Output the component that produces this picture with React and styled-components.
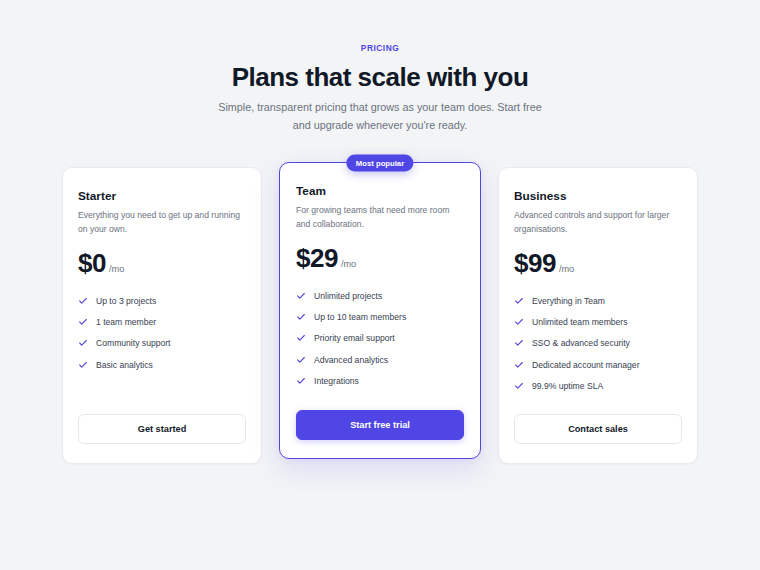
import React from "react";
import styled, { createGlobalStyle, css } from "styled-components";

const GlobalStyle = createGlobalStyle`
  * { box-sizing: border-box; }
  html, body { margin: 0; padding: 0; }
  body {
    background: #f3f4f6;
    font-family: "Liberation Sans", Arial, Helvetica, sans-serif;
    color: #111827;
    -webkit-font-smoothing: antialiased;
  }
`;

const Page = styled.main`
  min-height: 570px;
  padding: 42px 0 40px;
  display: flex;
  flex-direction: column;
  align-items: center;
`;

const Eyebrow = styled.div`
  font-size: 8.4px;
  line-height: 12px;
  font-weight: 700;
  letter-spacing: 0.5px;
  color: #4f46e5;
  text-transform: uppercase;
`;

const Heading = styled.h1`
  margin: 8px 0 0;
  font-size: 26px;
  line-height: 31.2px;
  font-weight: 700;
  letter-spacing: -0.5px;
  color: #111827;
  text-align: center;
`;

const Lead = styled.p`
  margin: 6px 0 0;
  max-width: 330px;
  font-size: 10.8px;
  line-height: 17.3px;
  color: #6b7280;
  text-align: center;
`;

const Plans = styled.section`
  margin-top: 33px;
  display: grid;
  grid-template-columns: 200px 202px 200px;
  gap: 17px;
  align-items: stretch;
`;

const Card = styled.article`
  position: relative;
  display: flex;
  flex-direction: column;
  background: #ffffff;
  border-radius: 10px;
  border: 1px solid #e8eaee;
  padding: 21px 15px 19px;
  box-shadow: 0 1px 2px rgba(17, 24, 39, 0.04);

  ${(p) =>
    p.$featured &&
    css`
      border: 1.5px solid #4f46e5;
      padding: 21px 16px 18.5px;
      transform: translateY(-5px);
      box-shadow: 0 10px 28px rgba(79, 70, 229, 0.14),
        0 2px 6px rgba(79, 70, 229, 0.06);
    `}
`;

const Badge = styled.span`
  position: absolute;
  top: 0;
  left: 50%;
  transform: translate(-50%, -50%);
  height: 17px;
  padding: 0 9.5px;
  display: inline-flex;
  align-items: center;
  border-radius: 999px;
  background: #4f46e5;
  color: #ffffff;
  font-size: 7.7px;
  font-weight: 700;
  white-space: nowrap;
  box-shadow: 0 3px 8px rgba(79, 70, 229, 0.3);
`;

const PlanName = styled.h2`
  margin: 0;
  font-size: 11.8px;
  line-height: 15px;
  font-weight: 700;
  color: #111827;
`;

const PlanBlurb = styled.p`
  margin: 4px 0 0;
  font-size: 8.6px;
  line-height: 14px;
  color: #6b7280;
`;

const PriceRow = styled.div`
  margin-top: 14px;
  display: flex;
  align-items: baseline;
  gap: 3px;
`;

const Amount = styled.span`
  font-size: 26px;
  line-height: 26px;
  font-weight: 700;
  letter-spacing: -0.5px;
  color: #111827;
`;

const Period = styled.span`
  font-size: 9.2px;
  color: #6b7280;
`;

const Features = styled.ul`
  list-style: none;
  margin: 18px 0 21px;
  padding: 0;
  display: flex;
  flex-direction: column;
  gap: 7.33px;
`;

const Feature = styled.li`
  display: flex;
  align-items: center;
  gap: 8px;
  font-size: 8.6px;
  line-height: 14px;
  color: #374151;

  svg {
    flex: none;
    color: #5046d8;
  }
`;

const Action = styled.button`
  margin-top: auto;
  height: 30px;
  width: 100%;
  border-radius: 6px;
  font-family: inherit;
  font-size: 9.2px;
  font-weight: 700;
  cursor: pointer;
  border: 1px solid #e5e7eb;
  background: #ffffff;
  color: #111827;

  ${(p) =>
    p.$primary &&
    css`
      border-color: #4f46e5;
      background: #4f46e5;
      color: #ffffff;
      box-shadow: 0 2px 6px rgba(79, 70, 229, 0.25);
    `}
`;

const CheckIcon = () => (
  <svg
    width="10"
    height="10"
    viewBox="0 0 24 24"
    fill="none"
    stroke="currentColor"
    strokeWidth="2.6"
    strokeLinecap="round"
    strokeLinejoin="round"
  >
    <path d="M20 6 9 17l-5-5" />
  </svg>
);

const plans = [
  {
    name: "Starter",
    blurb: "Everything you need to get up and running on your own.",
    price: "$0",
    features: ["Up to 3 projects", "1 team member", "Community support", "Basic analytics"],
    cta: "Get started",
  },
  {
    name: "Team",
    blurb: "For growing teams that need more room and collaboration.",
    price: "$29",
    features: [
      "Unlimited projects",
      "Up to 10 team members",
      "Priority email support",
      "Advanced analytics",
      "Integrations",
    ],
    cta: "Start free trial",
    featured: true,
  },
  {
    name: "Business",
    blurb: "Advanced controls and support for larger organisations.",
    price: "$99",
    features: [
      "Everything in Team",
      "Unlimited team members",
      "SSO & advanced security",
      "Dedicated account manager",
      "99.9% uptime SLA",
    ],
    cta: "Contact sales",
  },
];

export default function App() {
  return (
    <>
      <GlobalStyle />
      <Page>
        <Eyebrow>Pricing</Eyebrow>
        <Heading>Plans that scale with you</Heading>
        <Lead>
          Simple, transparent pricing that grows as your team does. Start free and
          upgrade whenever you're ready.
        </Lead>
        <Plans>
          {plans.map((plan) => (
            <Card key={plan.name} $featured={plan.featured}>
              {plan.featured && <Badge>Most popular</Badge>}
              <PlanName>{plan.name}</PlanName>
              <PlanBlurb>{plan.blurb}</PlanBlurb>
              <PriceRow>
                <Amount>{plan.price}</Amount>
                <Period>/mo</Period>
              </PriceRow>
              <Features>
                {plan.features.map((f) => (
                  <Feature key={f}>
                    <CheckIcon />
                    {f}
                  </Feature>
                ))}
              </Features>
              <Action $primary={plan.featured}>{plan.cta}</Action>
            </Card>
          ))}
        </Plans>
      </Page>
    </>
  );
}
